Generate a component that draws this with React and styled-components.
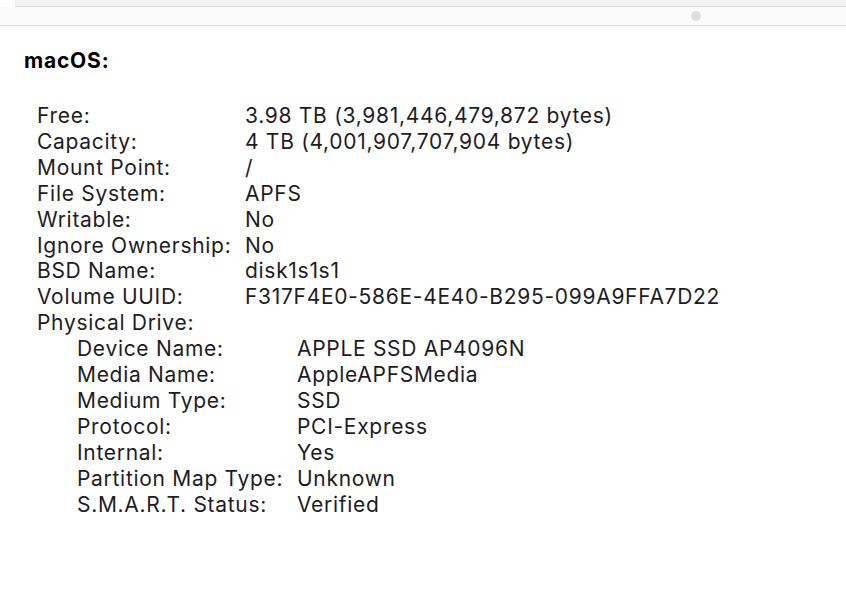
import React from "react";
import styled, { createGlobalStyle } from "styled-components";

const GlobalStyle = createGlobalStyle`
  body {
    margin: 0;
    background: #ffffff;
    font-family: Inter, "Liberation Sans", sans-serif;
    color: #1d1d1f;
  }
`;

const volume = [
  ["Free:", "3.98 TB (3,981,446,479,872 bytes)"],
  ["Capacity:", "4 TB (4,001,907,707,904 bytes)"],
  ["Mount Point:", "/"],
  ["File System:", "APFS"],
  ["Writable:", "No"],
  ["Ignore Ownership:", "No"],
  ["BSD Name:", "disk1s1s1"],
  ["Volume UUID:", "F317F4E0-586E-4E40-B295-099A9FFA7D22"],
];

const drive = [
  ["Device Name:", "APPLE SSD AP4096N"],
  ["Media Name:", "AppleAPFSMedia"],
  ["Medium Type:", "SSD"],
  ["Protocol:", "PCI-Express"],
  ["Internal:", "Yes"],
  ["Partition Map Type:", "Unknown"],
  ["S.M.A.R.T. Status:", "Verified"],
];

const App = () => {
  return (
    <>
      <GlobalStyle />
      <Window>
        <TopStrip />
        <Toolbar>
          <Knob />
        </Toolbar>
        <Content>
          <Title>macOS:</Title>
          <Details $labelWidth={208}>
            {volume.map(([k, v]) => (
              <React.Fragment key={k}>
                <Label>{k}</Label>
                <Value>{v}</Value>
              </React.Fragment>
            ))}
            <Label>Physical Drive:</Label>
            <Value />
            <Nested>
              <Details $labelWidth={220} $inner>
                {drive.map(([k, v]) => (
                  <React.Fragment key={k}>
                    <Label>{k}</Label>
                    <Value>{v}</Value>
                  </React.Fragment>
                ))}
              </Details>
            </Nested>
          </Details>
        </Content>
      </Window>
    </>
  );
};

export default App;

const Window = styled.div`
  width: 846px;
  height: 610px;
  background: #fff;
  overflow: hidden;
`;

const TopStrip = styled.div`
  height: 6px;
  margin-left: 15px;
  background: #f2f2f2;
  border-bottom: 1px solid #dadada;
`;

const Toolbar = styled.div`
  height: 18px;
  background: #fafafa;
  border-bottom: 1px solid #dcdcdc;
  display: flex;
  align-items: center;
  padding-left: 691px;
`;

const Knob = styled.div`
  width: 10px;
  height: 10px;
  border-radius: 50%;
  background: #dedede;
`;

const Content = styled.div`
  padding: 23px 0 0 24px;
`;

const Title = styled.h1`
  margin: 0 0 30px;
  font-size: 21px;
  line-height: 24px;
  font-weight: 700;
  letter-spacing: 0.8px;
  color: #000;
`;

const Details = styled.div`
  display: grid;
  grid-template-columns: ${(p) => p.$labelWidth}px 1fr;
  padding-left: ${(p) => (p.$inner ? 0 : 13)}px;
  font-size: 21px;
  line-height: 25.9px;
  letter-spacing: 0.7px;
`;

const Nested = styled.div`
  grid-column: 1 / -1;
  padding-left: 40px;
`;

const Label = styled.div`
  white-space: nowrap;
`;

const Value = styled.div`
  white-space: nowrap;
`;
